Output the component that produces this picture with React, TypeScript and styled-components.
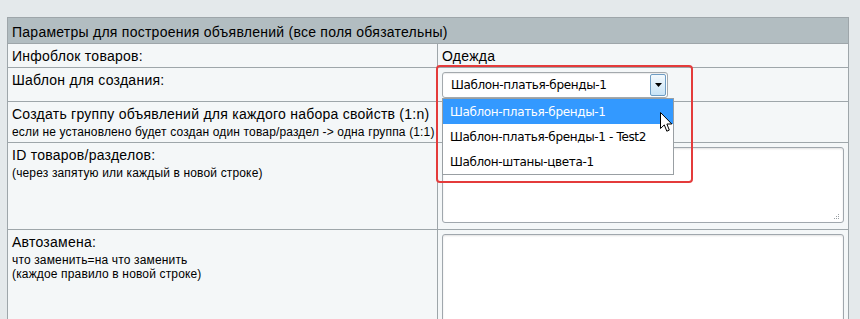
import { FC } from 'react';
import styled, { createGlobalStyle } from 'styled-components';

const GlobalStyle = createGlobalStyle`
	html, body {
		margin: 0;
		padding: 0;
		background: #e4e9eb;
	}
	body {
		font-family: 'Liberation Sans', Arial, sans-serif;
		color: #000;
	}
`;

const templates = [
	'Шаблон-платья-бренды-1',
	'Шаблон-платья-бренды-1 - Test2',
	'Шаблон-штаны-цвета-1',
];

const ArrowCursor: FC = () => (
	<Cursor width="13" height="21" viewBox="0 0 13 21">
		<path
			d="M0.5 0.5 L0.5 16.5 L4.3 12.9 L6.8 19.2 L9.3 18.1 L6.9 12 L11.8 12 Z"
			fill="#fff"
			stroke="#000"
			strokeWidth="1"
			strokeLinejoin="miter"
		/>
	</Cursor>
);

const ResizeGrip: FC = () => (
	<Grip width="8" height="8" viewBox="0 0 8 8">
		{[
			[6, 0],
			[4, 2],
			[6, 2],
			[2, 4],
			[4, 4],
			[6, 4],
		].map(([x, y]) => (
			<rect key={`${x}-${y}`} x={x} y={y + 2} width="1" height="1" fill="#9aa0a4" />
		))}
	</Grip>
);

const App: FC = () => {
	return (
		<Page>
			<GlobalStyle />
			<Table>
				<HeaderRow>
					Параметры для построения объявлений (все поля обязательны)
				</HeaderRow>

				<Row $height={24}>
					<LabelCell>Инфоблок товаров:</LabelCell>
					<ValueCell>Одежда</ValueCell>
				</Row>

				<Row $height={34}>
					<LabelCell>Шаблон для создания:</LabelCell>
					<ValueCell>
						<SelectWrap>
							<SelectBox>
								<SelectText>{templates[0]}</SelectText>
								<SelectButton>
									<svg width="7" height="4" viewBox="0 0 7 4">
										<path d="M0 0 L7 0 L3.5 4 Z" fill="#000" />
									</svg>
								</SelectButton>
							</SelectBox>
							<OptionList>
								{templates.map((t, i) => (
									<Option key={t} $active={i === 0}>
										{t}
									</Option>
								))}
							</OptionList>
							<Highlight />
							<ArrowCursor />
						</SelectWrap>
					</ValueCell>
				</Row>

				<Row $height={41}>
					<LabelCell>
						Создать группу объявлений для каждого набора свойств (1:n)
						<Hint>
							если не установлено будет создан один товар/раздел -&gt; одна
							группа (1:1)
						</Hint>
					</LabelCell>
					<ValueCell />
				</Row>

				<Row $height={87}>
					<LabelCell>
						ID товаров/разделов:
						<Hint>(через запятую или каждый в новой строке)</Hint>
					</LabelCell>
					<ValueCell>
						<TextArea $height={76}>
							<ResizeGrip />
						</TextArea>
					</ValueCell>
				</Row>

				<Row $height={100}>
					<LabelCell>
						Автозамена:
						<Hint>
							что заменить=на что заменить
							<br />
							(каждое правило в новой строке)
						</Hint>
					</LabelCell>
					<ValueCell>
						<TextArea $height={95} />
					</ValueCell>
				</Row>
			</Table>
		</Page>
	);
};

const Page = styled.div`
	padding: 17px 0 0 7px;
	height: 302px;
	overflow: hidden;
`;

const Table = styled.div`
	width: 842px;
	box-sizing: border-box;
	border-top: 1px solid #9ea6aa;
	border-left: 1px solid #9ea6aa;
	font-size: 14px;
	line-height: 16px;
	letter-spacing: 0.25px;
`;

const HeaderRow = styled.div`
	box-sizing: border-box;
	height: 26px;
	padding: 6px 4px 0 4px;
	background: #b2bdc1;
	border-right: 1px solid #9ea6aa;
	border-bottom: 1px solid #9ea6aa;
`;

const Row = styled.div<{ $height: number }>`
	display: grid;
	grid-template-columns: 430px 411px;
	height: ${(p) => p.$height}px;
	background: #f4f7f8;
`;

const Cell = styled.div`
	box-sizing: border-box;
	border-right: 1px solid #9ea6aa;
	border-bottom: 1px solid #9ea6aa;
`;

const LabelCell = styled(Cell)`
	padding: 4px 4px 0 4px;
`;

const ValueCell = styled(Cell)`
	padding: 4px 4px 0 4px;
`;

const Hint = styled.div`
	margin-top: 3px;
	font-size: 12px;
	line-height: 14px;
	letter-spacing: 0.15px;
	white-space: nowrap;
`;

const SelectWrap = styled.div`
	position: relative;
	width: 226px;
	height: 26px;
	font-family: 'DejaVu Sans', Tahoma, sans-serif;
	font-size: 12px;
	letter-spacing: -0.35px;
`;

const SelectBox = styled.div`
	box-sizing: border-box;
	height: 26px;
	display: flex;
	align-items: stretch;
	background: #fff;
	border: 1px solid #a3a9ad;
	border-radius: 3px;
	box-shadow: inset 0 1px 1px rgba(0, 0, 0, 0.08);
`;

const SelectText = styled.div`
	flex: 1;
	display: flex;
	align-items: center;
	padding-left: 8px;
	white-space: nowrap;
`;

const SelectButton = styled.div`
	box-sizing: border-box;
	width: 16px;
	margin: 1px 1px 1px 0;
	display: flex;
	align-items: center;
	justify-content: center;
	border: 1px solid #6e9dc4;
	border-radius: 2px;
	background: linear-gradient(#f3f9fd, #c8e3f6);
`;

const OptionList = styled.div`
	position: absolute;
	top: 26px;
	left: 0;
	width: 232px;
	box-sizing: border-box;
	background: #fff;
	border: 1px solid #999fa3;
	z-index: 2;
`;

const Option = styled.div<{ $active?: boolean }>`
	height: 25px;
	display: flex;
	align-items: center;
	padding-left: 7px;
	white-space: nowrap;
	background: ${(p) => (p.$active ? '#3399ff' : '#fff')};
	color: ${(p) => (p.$active ? '#fff' : '#000')};
`;

const Highlight = styled.div`
	position: absolute;
	left: -6px;
	top: -7px;
	width: 257px;
	height: 118px;
	box-sizing: border-box;
	border: 2px solid #e43b3b;
	border-radius: 4px;
	z-index: 3;
	pointer-events: none;
`;

const Cursor = styled.svg`
	position: absolute;
	left: 218px;
	top: 40px;
	z-index: 4;
`;

const TextArea = styled.div<{ $height: number }>`
	box-sizing: border-box;
	position: relative;
	width: 402px;
	height: ${(p) => p.$height}px;
	background: #fff;
	border: 1px solid #a0a7ad;
	border-radius: 3px;
	box-shadow: inset 0 1px 2px rgba(0, 0, 0, 0.12);
`;

const Grip = styled.svg`
	position: absolute;
	right: 3px;
	bottom: 2px;
`;

export default App;
